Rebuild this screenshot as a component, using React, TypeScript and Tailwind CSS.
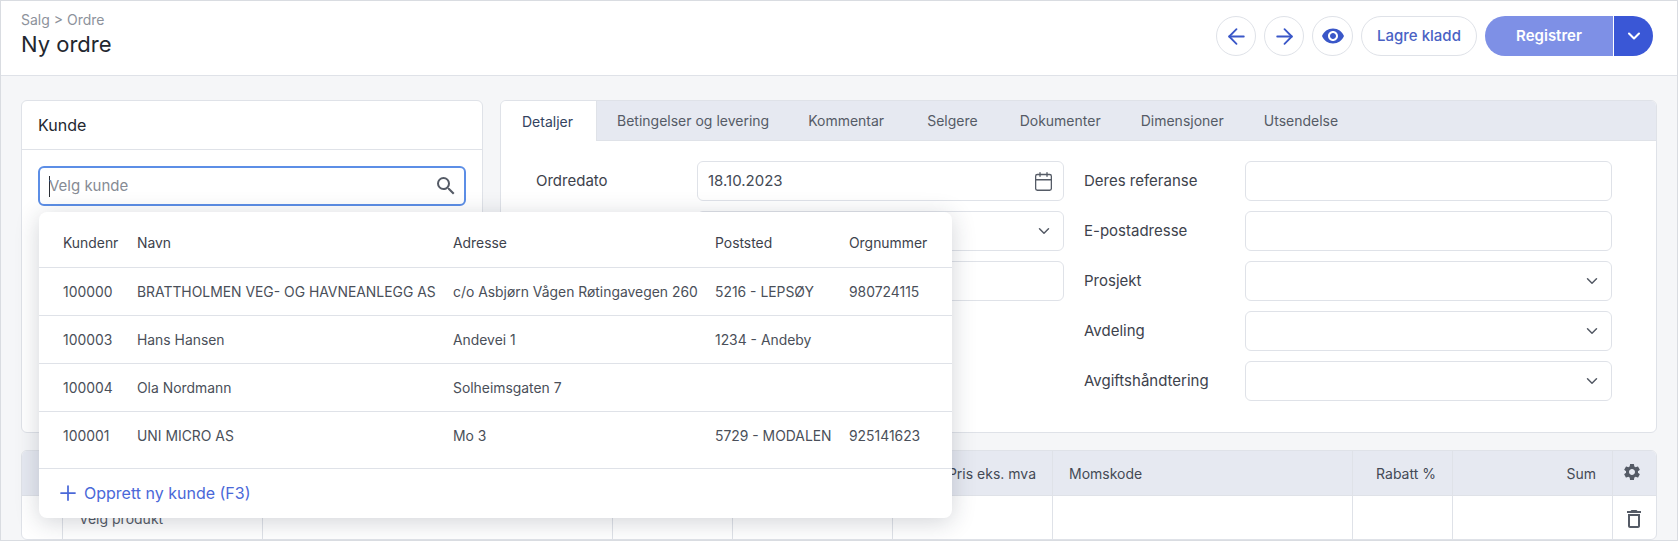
import { ArrowLeft, ArrowRight, Calendar, ChevronDown, Plus } from "lucide-react";
import { MdOutlineDelete, MdSearch, MdSettings, MdVisibility } from "react-icons/md";

const tabs = [
  { label: "Detaljer", cls: "-mb-px border-r border-[#dfe2e8] bg-white pl-[21px] text-[#33435f] w-[96px]" },
  { label: "Betingelser og levering", cls: "pl-5 pr-[19px]" },
  { label: "Kommentar", cls: "px-5" },
  { label: "Selgere", cls: "ml-[3px] px-5" },
  { label: "Dokumenter", cls: "ml-[2px] px-5" },
  { label: "Dimensjoner", cls: "px-5" },
  { label: "Utsendelse", cls: "px-5" },
];

const customers = [
  ["100000", "BRATTHOLMEN VEG- OG HAVNEANLEGG AS", "c/o Asbjørn Vågen Røtingavegen 260", "5216 - LEPSØY", "980724115"],
  ["100003", "Hans Hansen", "Andevei 1", "1234 - Andeby", ""],
  ["100004", "Ola Nordmann", "Solheimsgaten 7", "", ""],
  ["100001", "UNI MICRO AS", "Mo 3", "5729 - MODALEN", "925141623"],
];

const rightFields = [
  ["Deres referanse", false],
  ["E-postadresse", false],
  ["Prosjekt", true],
  ["Avdeling", true],
  ["Avgiftshåndtering", true],
] as const;

const Field = ({ select, children }: { select?: boolean; children?: React.ReactNode }) => (
  <div className="flex h-10 items-center justify-between rounded-md border border-[#dfe2e8] bg-white px-[10px] text-[15px] text-[#444a55]">
    <span>{children}</span>
    {select && <ChevronDown className="h-[18px] w-[18px] text-[#555b66]" />}
  </div>
);

const CircleButton = ({ children, wide }: { children: React.ReactNode; wide?: boolean }) => (
  <button className={`flex h-10 items-center justify-center rounded-full border border-[#dfe2e8] bg-white text-[#3a57c8] ${wide ? "w-[41px]" : "w-10"}`}>
    {children}
  </button>
);

const rowGrid = "grid grid-cols-[74px_316px_262px_134px_1fr] items-center pl-[24px]";
const lineGrid = "grid grid-cols-[41px_200px_350px_120px_160px_160px_300px_100px_160px_1fr]";

export default function App() {
  return (
    <div className="relative flex h-[541px] w-[1678px] flex-col overflow-hidden border border-[#d9dce1] bg-[#f5f6f8] font-['Inter',sans-serif] text-[#3d424c]">
      {/* Page header */}
      <header className="flex h-[75px] shrink-0 items-start justify-between border-b border-[#dfe2e8] bg-white pl-[20px] pr-[24px]">
        <div className="pt-[9px]">
          <div className="text-[14px] leading-5 text-[#8d929b]">Salg &gt; Ordre</div>
          <h1 className="text-[22px] leading-7 text-[#23272f]">Ny ordre</h1>
        </div>
        <div className="flex items-center gap-2 pt-[15px]">
          <CircleButton><ArrowLeft className="h-[25px] w-[25px]" strokeWidth={1.75} /></CircleButton>
          <CircleButton><ArrowRight className="h-[25px] w-[25px]" strokeWidth={1.75} /></CircleButton>
          <CircleButton wide><MdVisibility className="h-6 w-6" /></CircleButton>
          <button className="h-10 w-[116px] rounded-full border border-[#dfe2e8] bg-white text-[15px] font-medium text-[#4a62c4]">Lagre kladd</button>
          <div className="flex h-10">
            <button className="w-[128px] rounded-l-full bg-[#7e90e6] text-[15px] font-semibold text-white">Registrer</button>
            <button className="ml-px flex w-[39px] items-center justify-center rounded-r-full bg-[#3a57d6] text-white">
              <ChevronDown className="h-5 w-5" strokeWidth={2.5} />
            </button>
          </div>
        </div>
      </header>

      <main className="flex flex-1 flex-col gap-[17px] px-[20px] pt-[24px]">
        <div className="flex gap-[17px]">
          {/* Customer card */}
          <section className="h-[333px] w-[462px] shrink-0 rounded-md border border-[#dfe2e8] bg-white">
            <div className="flex h-[49px] items-center border-b border-[#dfe2e8] px-4 text-[16px] text-[#23272f]">Kunde</div>
            <div className="px-4 pt-[16px]">
              <div className="flex h-[40px] items-center justify-between rounded-md border-2 border-[#5c8ee6] bg-white pl-[9px] pr-[6px]">
                <div className="flex items-center text-[15px] text-[#868b94]">
                  <span className="h-[21px] w-px bg-[#2a2e36]" />
                  <span className="-ml-px">Velg kunde</span>
                </div>
                <MdSearch className="h-6 w-6 text-[#555b66]" />
              </div>
            </div>
          </section>

          {/* Order details card */}
          <section className="h-[333px] flex-1 overflow-hidden rounded-md border border-[#dfe2e8] bg-white">
            <nav className="flex h-[40px] border-b border-[#dfe2e8] bg-[#e6e9f1] text-[14px] text-[#555b66]">
              {tabs.map((t) => (
                <div key={t.label} className={`flex items-center ${t.cls}`}>
                  {t.label}
                </div>
              ))}
            </nav>
            <div className="flex pl-[35px] pt-[20px]">
              <div className="flex w-[528px] flex-col gap-[10px]">
                <div className="grid grid-cols-[161px_367px] items-center text-[15px]">
                  <span>Ordredato</span>
                  <div className="flex h-10 items-center justify-between rounded-md border border-[#dfe2e8] pl-[10px] pr-[9px] text-[#444a55]">
                    18.10.2023
                    <Calendar className="h-[21px] w-[21px] text-[#555b66]" strokeWidth={1.5} />
                  </div>
                </div>
                <div className="grid grid-cols-[161px_367px] items-center text-[15px]">
                  <span />
                  <Field select />
                </div>
                <div className="grid grid-cols-[161px_367px] items-center text-[15px]">
                  <span />
                  <Field />
                </div>
              </div>
              <div className="ml-[20px] flex w-[528px] flex-col gap-[10px]">
                {rightFields.map(([label, select]) => (
                  <div key={label} className="grid grid-cols-[161px_367px] items-center text-[15px]">
                    <span>{label}</span>
                    <Field select={select} />
                  </div>
                ))}
              </div>
            </div>
          </section>
        </div>

        {/* Product lines */}
        <section className="h-[90px] shrink-0 overflow-hidden rounded-md border border-[#dfe2e8] bg-white text-[14px]">
          <div className={`${lineGrid} h-[45px] border-b border-[#dfe2e8] bg-[#e6e9f1] text-[#444a55]`}>
            <div className="border-r border-[#dfe2e8]" />
            <div className="border-r border-[#dfe2e8]" />
            <div className="border-r border-[#dfe2e8]" />
            <div className="border-r border-[#dfe2e8]" />
            <div className="border-r border-[#dfe2e8]" />
            <div className="flex items-center justify-end border-r border-[#dfe2e8] pr-4">Pris eks. mva</div>
            <div className="flex items-center border-r border-[#dfe2e8] pl-4">Momskode</div>
            <div className="flex items-center justify-end border-r border-[#dfe2e8] pr-4">Rabatt %</div>
            <div className="flex items-center justify-end border-r border-[#dfe2e8] pr-4">Sum</div>
            <div className="flex items-center justify-center pb-[3px] pr-[5px]"><MdSettings className="h-5 w-5 text-[#555b66]" /></div>
          </div>
          <div className={`${lineGrid} h-[45px]`}>
            <div className="border-r border-[#dfe2e8]" />
            <div className="flex items-center border-r border-[#dfe2e8] pl-[16px] text-[#555b66]">Velg produkt</div>
            <div className="border-r border-[#dfe2e8]" />
            <div className="border-r border-[#dfe2e8]" />
            <div className="border-r border-[#dfe2e8]" />
            <div className="border-r border-[#dfe2e8]" />
            <div className="border-r border-[#dfe2e8]" />
            <div className="border-r border-[#dfe2e8]" />
            <div className="border-r border-[#dfe2e8]" />
            <div className="flex items-center justify-center pr-[2px]"><MdOutlineDelete className="h-6 w-6 text-[#555b66]" /></div>
          </div>
        </section>
      </main>

      {/* Customer lookup dropdown */}
      <div className="absolute left-[38px] top-[211px] z-10 w-[913px] rounded-lg bg-white text-[13.9px] text-[#4a4f59] shadow-[0_4px_24px_rgba(30,40,60,0.2)]">
        <div className={`${rowGrid} h-[56px] border-b border-[#dfe2e8] pt-[7px] text-[#3d424c]`}>
          <span>Kundenr</span>
          <span>Navn</span>
          <span>Adresse</span>
          <span>Poststed</span>
          <span>Orgnummer</span>
        </div>
        {customers.map((c, i) => (
          <div key={c[0]} className={`${rowGrid} border-b border-[#dfe2e8] ${i === 3 ? "h-[57px] pb-[8px]" : "h-[48px] pt-[1px]"}`}>
            {c.map((v, j) => <span key={j} className="whitespace-nowrap">{v}</span>)}
          </div>
        ))}
        <div className="flex h-[49px] items-center gap-[4px] pb-[2px] pl-[17px] text-[16px] text-[#4a68d8]">
          <Plus className="h-6 w-6" strokeWidth={1.75} />
          Opprett ny kunde (F3)
        </div>
      </div>
    </div>
  );
}
